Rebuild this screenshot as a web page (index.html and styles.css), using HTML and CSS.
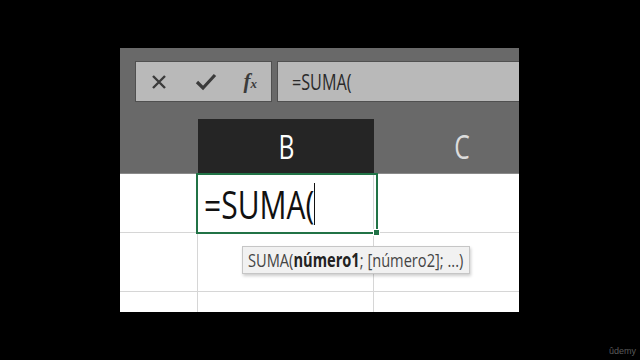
FILE: index.html
```html
<!DOCTYPE html>
<html lang="es">

<head>
    <meta charset="UTF-8">
    <title>SUMA</title>
    <link rel="stylesheet" href="styles.css">
</head>

<body>
    <div class="sheet">
        <!-- Formula bar -->
        <div class="formula-row">
            <div class="tools">
                <svg class="tool" width="18" height="18" viewBox="0 0 18 18">
                    <path d="M3 3 L15 15 M15 3 L3 15" stroke="#3b3b3b" stroke-width="2.4" fill="none" />
                </svg>
                <svg class="tool" width="22" height="18" viewBox="0 0 22 18">
                    <path d="M2 9 L8 15 L20 2" stroke="#3b3b3b" stroke-width="3.2" fill="none" />
                </svg>
                <span class="fx">f<span class="fx-sub">x</span></span>
            </div>
            <div class="formula-input"><span class="squeeze">=SUMA(</span></div>
        </div>

        <!-- Column headers -->
        <div class="headers">
            <div class="corner"></div>
            <div class="col-head active"><span class="squeeze">B</span></div>
            <div class="col-head"><span class="squeeze">C</span></div>
        </div>

        <!-- Grid -->
        <div class="grid">
            <div class="row">
                <div class="cell first"></div>
                <div class="cell wide"></div>
                <div class="cell last"></div>
            </div>
            <div class="row">
                <div class="cell first"></div>
                <div class="cell wide"></div>
                <div class="cell last"></div>
            </div>
            <div class="row">
                <div class="cell first"></div>
                <div class="cell wide"></div>
                <div class="cell last"></div>
            </div>

            <div class="selection">
                <span class="squeeze big">=SUMA(</span><span class="caret"></span>
                <div class="handle"></div>
            </div>

            <div class="hint">
                <span class="squeeze">SUMA(<b>número1</b>; [número2]; ...)</span>
            </div>
        </div>
    </div>

    <div class="brand">ûdemy</div>
</body>

</html>
```

FILE: styles.css
```css
body {
    margin: 0;
    width: 640px;
    height: 360px;
    background-color: #000;
    font-family: 'Open Sans', sans-serif;
    overflow: hidden;
    position: relative;
}

.sheet {
    margin: 48px 0 0 120px;
    width: 399px;
    height: 264px;
    background-color: #696969;
    overflow: hidden;
    display: flex;
    flex-direction: column;
}

.squeeze {
    display: inline-block;
    transform: scaleX(0.77);
    transform-origin: left center;
    white-space: nowrap;
}

/* Formula bar */
.formula-row {
    display: flex;
    flex-shrink: 0;
    gap: 5px;
    margin: 13px 0 0 15px;
    height: 41px;
}

.tools {
    width: 137px;
    flex-shrink: 0;
    box-sizing: border-box;
    background-color: #b9b9b9;
    border: 1px solid #505050;
    display: flex;
    align-items: center;
    padding: 0 10px 0 14px;
    justify-content: space-between;
}

.fx {
    font-family: 'Liberation Serif', serif;
    font-style: italic;
    font-weight: bold;
    font-size: 21px;
    color: #3b3b3b;
    margin-right: 4px;
}

.fx-sub {
    font-size: 13px;
}

.formula-input {
    flex: 1;
    background-color: #b9b9b9;
    border: 1px solid #505050;
    border-right: none;
    display: flex;
    align-items: center;
    padding-left: 14px;
    font-size: 21px;
    color: #2a2a2a;
}

/* Headers */
.headers {
    display: flex;
    flex-shrink: 0;
    margin-top: 17px;
    height: 54px;
    border-bottom: 1px solid #8a8a8a;
}

.corner {
    width: 78px;
    flex-shrink: 0;
}

.col-head {
    width: 176px;
    flex-shrink: 0;
    display: flex;
    align-items: center;
    justify-content: center;
    font-size: 32px;
    color: #dcdcdc;
}

.col-head .squeeze {
    transform-origin: center;
}

.col-head.active {
    background-color: #252525;
    color: #fff;
}

/* Grid */
.grid {
    flex: 1;
    min-height: 0;
    background-color: #fff;
    position: relative;
}

.row {
    display: flex;
    flex-shrink: 0;
    height: 58px;
    border-bottom: 1px solid #d6d6d6;
}

.cell {
    flex-shrink: 0;
    border-right: 1px solid #d6d6d6;
}

.cell.first {
    width: 77px;
}

.cell.wide {
    width: 175px;
}

.cell.last {
    flex: 1;
    border-right: none;
}

.selection {
    position: absolute;
    left: 76px;
    top: -1px;
    width: 172px;
    height: 57px;
    border: 2px solid #217346;
    display: flex;
    align-items: center;
    padding-left: 6px;
}

.big {
    font-size: 39px;
    color: #111;
    width: 110px;
}

.caret {
    width: 1px;
    height: 42px;
    background-color: #111;
}

.handle {
    position: absolute;
    right: -4px;
    bottom: -4px;
    width: 5px;
    height: 5px;
    background-color: #217346;
    border: 1px solid #fff;
}

.hint {
    position: absolute;
    left: 122px;
    top: 72px;
    width: 228px;
    height: 28px;
    box-sizing: border-box;
    background-color: #f1f1f1;
    border: 1px solid #c6c6c6;
    box-shadow: 1px 2px 3px rgba(0, 0, 0, 0.2);
    display: flex;
    align-items: center;
    padding-left: 5px;
    font-size: 19px;
    color: #444;
}

.hint b {
    color: #222;
}

.brand {
    position: absolute;
    right: 4px;
    bottom: 4px;
    font-family: 'Liberation Sans', sans-serif;
    font-size: 9px;
    color: #5a5a5a;
}
```
